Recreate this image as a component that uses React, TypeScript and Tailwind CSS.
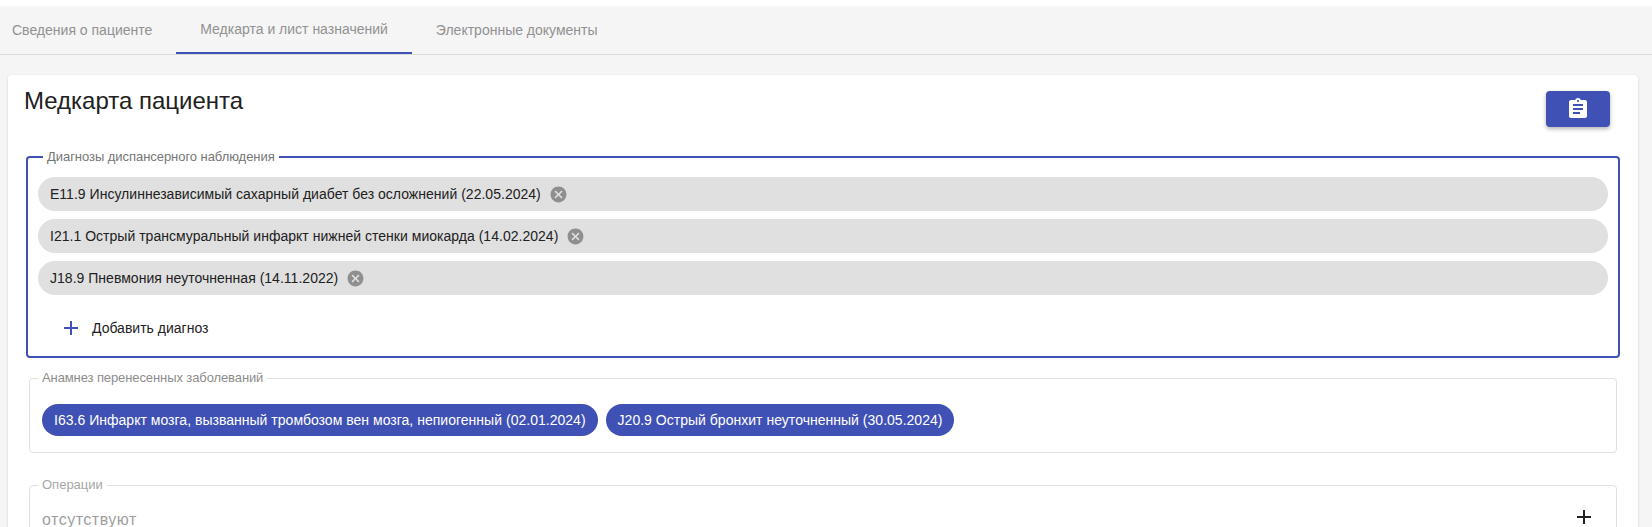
const tabs = ['Сведения о пациенте', 'Медкарта и лист назначений', 'Электронные документы'];

const diagnoses = [
  'E11.9 Инсулиннезависимый сахарный диабет без осложнений (22.05.2024)',
  'I21.1 Острый трансмуральный инфаркт нижней стенки миокарда (14.02.2024)',
  'J18.9 Пневмония неуточненная (14.11.2022)',
];

const history = [
  'I63.6 Инфаркт мозга, вызванный тромбозом вен мозга, непиогенный (02.01.2024)',
  'J20.9 Острый бронхит неуточненный (30.05.2024)',
];

function AddIcon({ className }: { className: string }) {
  return (
    <svg viewBox="0 0 24 24" className={className}>
      <path d="M19 13h-6v6h-2v-6H5v-2h6V5h2v6h6v2z" />
    </svg>
  );
}

function ChipCancel() {
  return (
    <svg viewBox="0 0 24 24" className="ml-[8px] h-[19px] w-[19px] fill-[#8f8f8f]">
      <path d="M12 2C6.47 2 2 6.47 2 12s4.47 10 10 10 10-4.47 10-10S17.53 2 12 2zm5 13.59L15.59 17 12 13.41 8.41 17 7 15.59 10.59 12 7 8.41 8.41 7 12 10.59 15.59 7 17 8.41 13.41 12 17 15.59z" />
    </svg>
  );
}

export default function App() {
  return (
    <div className="h-[527px] overflow-hidden bg-white pt-[6px] font-['Liberation_Sans',Arial,sans-serif]">
      <div className="h-[521px] bg-[#f5f5f5]">
        <div className="flex h-[49px] border-b border-[#d9d9d9]">
          {tabs.map((tab, i) => (
            <div
              key={tab}
              className={`flex h-[48px] items-center text-[14px] text-[#919191] ${
                i === 0 ? 'pl-[12px] pr-[24px]' : 'px-[24px]'
              } ${i === 1 ? 'border-b-2 border-[#3f51b5]' : ''}`}
            >
              {tab}
            </div>
          ))}
        </div>

        <div className="ml-[8px] mt-[20px] h-[460px] w-[1630px] rounded bg-white shadow-[0_1px_3px_rgba(0,0,0,0.15)]">
          <div className="flex items-start justify-between pl-[16px] pr-[28px] pt-[12px]">
            <h1 className="text-[24px] leading-[28px] text-[#212121]">Медкарта пациента</h1>
            <button className="mt-[4px] flex h-[36px] w-[64px] items-center justify-center rounded bg-[#3f51b5] shadow-[0_2px_4px_rgba(0,0,0,0.3)]">
              <svg viewBox="0 0 24 24" className="h-[24px] w-[24px] fill-white">
                <path d="M19 3h-4.18C14.4 1.84 13.3 1 12 1c-1.3 0-2.4.84-2.82 2H5c-1.1 0-2 .9-2 2v14c0 1.1.9 2 2 2h14c1.1 0 2-.9 2-2V5c0-1.1-.9-2-2-2zm-7 0c.55 0 1 .45 1 1s-.45 1-1 1-1-.45-1-1 .45-1 1-1zm2 14H7v-2h7v2zm3-4H7v-2h10v2zm0-4H7V7h10v2z" />
              </svg>
            </button>
          </div>

          <fieldset className="mx-[18px] mt-[23px] h-[208px] rounded border-2 border-[#3f51b5] px-[10px]">
            <legend className="ml-[5px] px-[4px] text-[13px] leading-[14px] tracking-[-0.05px] text-[#757575]">
              Диагнозы диспансерного наблюдения
            </legend>
            <div className="mt-[13px] flex flex-col gap-[8px]">
              {diagnoses.map((d) => (
                <div key={d} className="flex h-[34px] items-center rounded-full bg-[#e0e0e0] pl-[12px] text-[14px] tracking-[0.02px] text-[#212121]">
                  {d}
                  <ChipCancel />
                </div>
              ))}
            </div>
            <div className="mt-[21px] flex h-[24px] items-center pl-[21px] text-[14px] text-[#212121]">
              <AddIcon className="mr-[9px] h-[24px] w-[24px] fill-[#3f51b5]" />
              Добавить диагноз
            </div>
          </fieldset>

          <fieldset className="mx-[21px] mt-[13px] h-[82px] rounded border border-[#e0e0e0] px-[12px]">
            <legend className="-ml-[4px] px-[4px] text-[13px] leading-[14px] tracking-[-0.1px] text-[#8c8c8c]">
              Анамнез перенесенных заболеваний
            </legend>
            <div className="mt-[19px] flex gap-[8px]">
              {history.map((h) => (
                <div key={h} className="flex h-[32px] items-center rounded-full bg-[#3f51b5] px-[12px] text-[14px] tracking-[0.02px] text-white">
                  {h}
                </div>
              ))}
            </div>
          </fieldset>

          <fieldset className="mx-[21px] mt-[25px] h-[80px] rounded border border-[#e0e0e0] pl-[12px] pr-[20px]">
            <legend className="-ml-[4px] px-[4px] text-[13px] leading-[14px] text-[#a6a6a6]">Операции</legend>
            <div className="mt-[13px] flex items-start justify-between text-[16px] leading-[24px] tracking-[0.5px] text-[#9e9e9e]">
              <span className="mt-[3px]">отсутствуют</span>
              <AddIcon className="h-[24px] w-[24px] fill-[#212121]" />
            </div>
          </fieldset>
        </div>
      </div>
    </div>
  );
}
